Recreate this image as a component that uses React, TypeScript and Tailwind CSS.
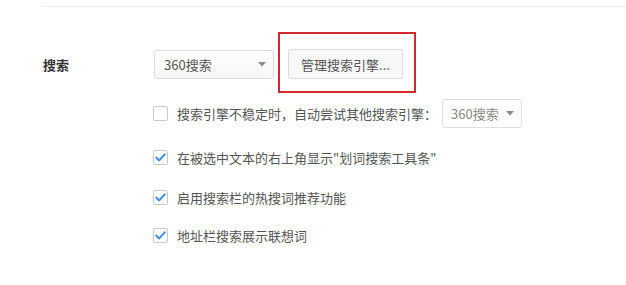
import React from "react";

const font = { fontFamily: '"Noto Sans CJK SC", "Noto Sans", sans-serif' };

function Arrow() {
  return (
    <svg width="8" height="5" viewBox="0 0 8 5" className="shrink-0">
      <path d="M0 0 L8 0 L4 4.5 Z" fill="#8a8a8a" />
    </svg>
  );
}

function Check({ checked }: { checked: boolean }) {
  return (
    <div className="w-[15px] h-[15px] rounded-[2px] border border-[#c9c9c9] bg-white flex items-center justify-center shrink-0">
      {checked && (
        <svg width="11" height="9" viewBox="0 0 11 9">
          <path d="M1.2 4.6 L4.2 7.4 L9.8 1.4" fill="none" stroke="#3a8ee6" strokeWidth="2" strokeLinecap="round" strokeLinejoin="round" />
        </svg>
      )}
    </div>
  );
}

function Row({ checked, text, cls }: { checked: boolean; text: string; cls: string }) {
  return (
    <div className={`flex items-center h-[20px] pl-[153px] ${cls}`}>
      <Check checked={checked} />
      <span className="ml-[9px] text-[13px] text-[#555] leading-none whitespace-nowrap">{text}</span>
    </div>
  );
}

export default function App() {
  return (
    <div className="relative w-[626px] h-[285px] bg-white overflow-hidden" style={font}>
      <div className="ml-[42px] h-[7px] border-b border-[#ebebeb]" />

      <div className="flex items-center mt-[42px] h-[30px]">
        <div className="w-[154px] pl-[43px] text-[13px] font-bold text-[#333] leading-none">搜索</div>
        <div className="w-[120px] h-[29px] rounded-[3px] border border-[#dcdcdc] bg-gradient-to-b from-white to-[#f6f6f6] flex items-center justify-between pl-[9px] pr-[7px]">
          <span className="text-[13px] text-[#555] leading-none">360搜索</span>
          <Arrow />
        </div>
        <div className="ml-[14px] w-[115px] h-[30px] rounded-[2px] border border-[#dcdcdc] bg-[#f7f7f7] flex items-center justify-center">
          <span className="text-[13px] text-[#555] leading-none">管理搜索引擎...</span>
        </div>
      </div>

      <div className="flex items-center h-[29px] mt-[20px] pl-[153px]">
        <Check checked={false} />
        <span className="ml-[9px] text-[13px] text-[#555] leading-none whitespace-nowrap">搜索引擎不稳定时，自动尝试其他搜索引擎：</span>
        <div className="ml-auto mr-[104px] w-[80px] h-[29px] rounded-[3px] border border-[#e0e0e0] bg-white flex items-center justify-between pl-[8px] pr-[7px]">
          <span className="text-[13px] text-[#888] leading-none">360搜索</span>
          <Arrow />
        </div>
      </div>

      <Row checked text={'在被选中文本的右上角显示"划词搜索工具条"'} cls="mt-[19px]" />
      <Row checked text="启用搜索栏的热搜词推荐功能" cls="mt-[20px]" />
      <Row checked text="地址栏搜索展示联想词" cls="mt-[18px]" />

      <div className="absolute left-[278px] top-[32px] w-[138px] h-[61px] border-2 border-[#cf2a2f]" />
    </div>
  );
}
